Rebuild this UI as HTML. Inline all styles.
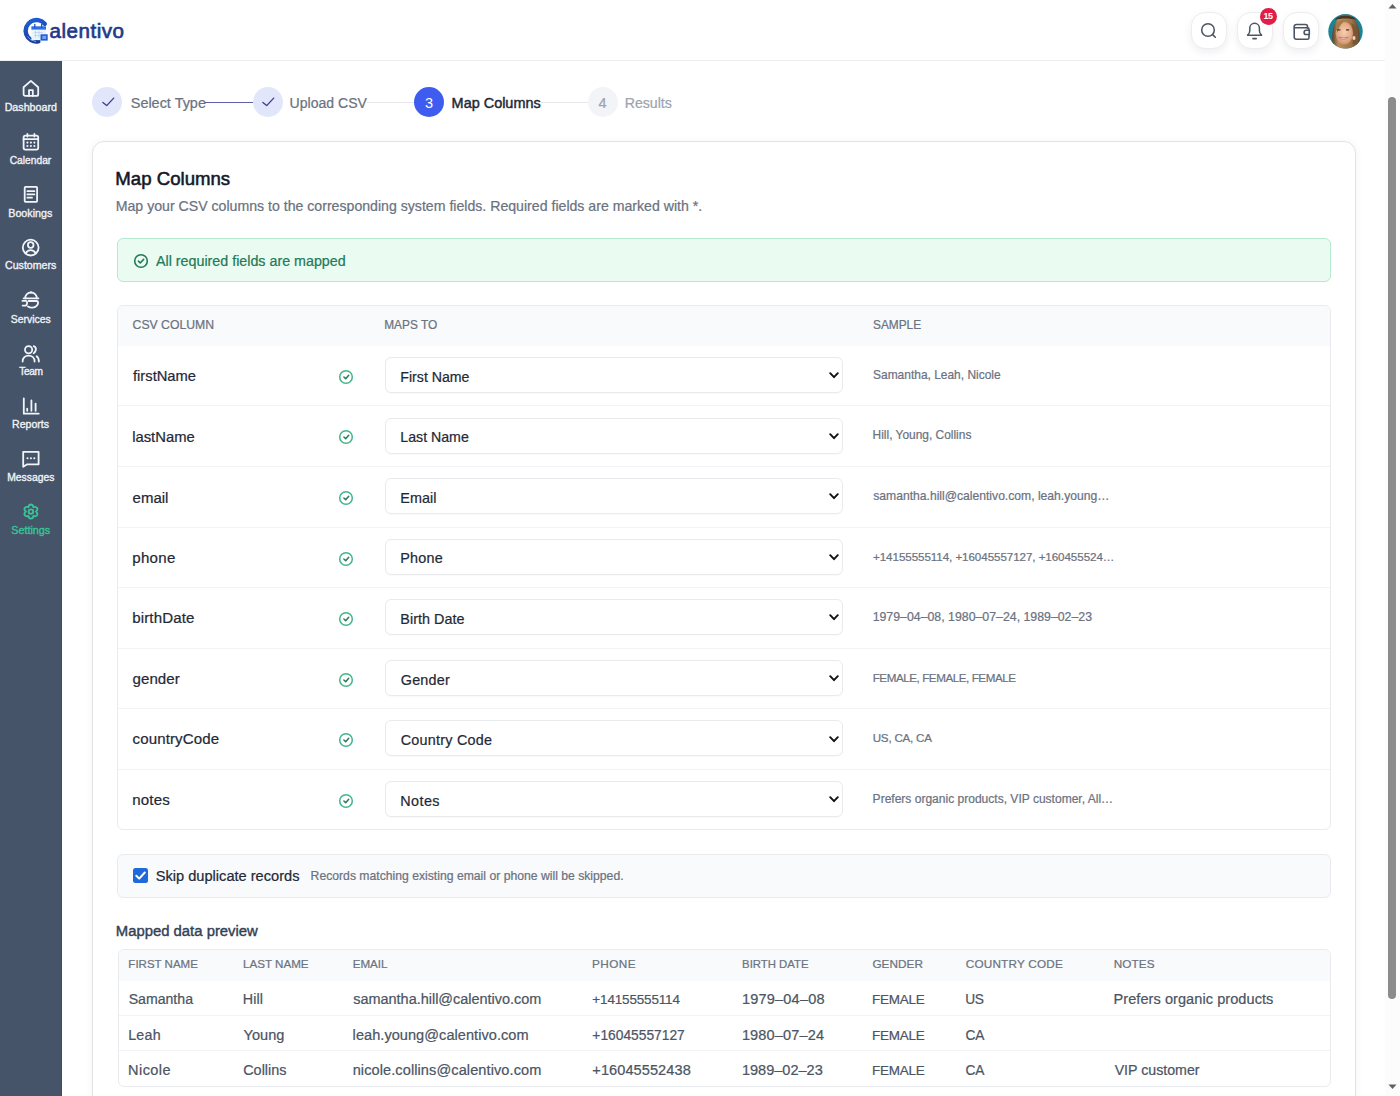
<!DOCTYPE html>
<html><head><meta charset="utf-8">
<style>
*{box-sizing:border-box;margin:0;padding:0}
html,body{width:1400px;height:1096px;overflow:hidden;background:#fff;font-family:"Liberation Sans",sans-serif;color:#1f2937}
.abs{position:absolute}
.t{position:absolute;white-space:nowrap}
svg{display:block}
#header{position:absolute;left:0;top:0;width:1385px;height:61px;background:#fff;border-bottom:1px solid #eceef1}
#sidebar{position:absolute;left:0;top:61px;width:61.5px;height:1035px;background:#465469;border-right:1px solid #3f4b5f}
.hbtn{position:absolute;top:12px;width:36px;height:37px;border-radius:14px;background:#fff;box-shadow:0 3px 8px rgba(0,0,0,0.07);border:1px solid #ebedf0}
#scroll{position:absolute;left:1385px;top:0;width:15px;height:1096px;background:#fcfcfc}
#thumb{position:absolute;left:3px;top:97px;width:8px;height:902px;background:#8c8c8c;border-radius:4px}
.circ{position:absolute;width:30px;height:30px;border-radius:50%}
#card{position:absolute;left:92px;top:141px;width:1264px;height:1000px;border:1px solid #e2e3e6;border-radius:12px;background:#fff;box-shadow:0 1px 8px rgba(0,0,0,0.05)}
.box{position:absolute}
.sel{position:absolute;left:385px;width:457.5px;height:36px;border:1px solid #e8eaed;border-radius:6px;background:#fff;box-shadow:0 1px 1px rgba(0,0,0,0.025)}
.hr{position:absolute;height:1px;background:#f1f3f5}
</style></head>
<body>

<div id="header">
<svg class="abs" style="left:20px;top:14px" width="32" height="32" viewBox="0 0 32 32">
<defs><linearGradient id="cg" x1="0" y1="0" x2="0.3" y2="1"><stop offset="0" stop-color="#1f5fd6"/><stop offset="1" stop-color="#1a3f9e"/></linearGradient></defs>
<path d="M24.8 9.9 A10.8 10.8 0 1 0 18.4 27.4" fill="none" stroke="url(#cg)" stroke-width="4.4" stroke-linecap="round"/>
<path d="M7.5 22.5 Q10 26.5 16 27.6" fill="none" stroke="#7fb0f5" stroke-width="0.9"/>
<rect x="11.4" y="12.3" width="14.6" height="13.8" fill="#eaf4ff"/>
<rect x="11.4" y="12.3" width="14.6" height="3.3" fill="#2f6fe4"/>
<path d="M14.8 10.3V13.4M21.6 10.3V13.4" stroke="#2552b8" stroke-width="1.3" stroke-linecap="round"/>
<path d="M14 18.5h9M14 21.5h6M15.5 17v7M19 17v7" stroke="#b9cdea" stroke-width="0.7"/>
<rect x="20.5" y="20.3" width="7.2" height="6.3" fill="#2558d0"/>
<rect x="22.3" y="21.8" width="3.8" height="3.2" fill="#6aa6f6"/>
</svg>
<div class="t" style="left:49.44px;top:21px;font-size:20.59px;line-height:20.59px;color:#1f3a8a;letter-spacing:0.518px;-webkit-text-stroke:0.7px #1f3a8a;">alentivo</div>
<div class="hbtn" style="left:1190.5px"></div>
<div class="hbtn" style="left:1236.5px"></div>
<div class="hbtn" style="left:1283px"></div>
<svg class="abs" style="left:1200px;top:22px" width="17" height="17" viewBox="0 0 17 17" fill="none" stroke="#4b5563" stroke-width="1.55" stroke-linecap="round" stroke-linejoin="round"><circle cx="8" cy="8" r="6.3"/><path d="M12.6 12.6 15.3 15.3"/></svg>
<svg class="abs" style="left:1246px;top:21px" width="19" height="19" viewBox="0 0 19 19" fill="none" stroke="#4b5563" stroke-width="1.5" stroke-linecap="round" stroke-linejoin="round"><path d="M1.6 14.2H15.6C14.4 13.2 13.4 11.8 13.4 9.8V7.1A4.8 4.8 0 0 0 3.8 7.1V9.8C3.8 11.8 2.8 13.2 1.6 14.2Z"/><path d="M7.1 17.6H10.1" stroke-width="1.9"/></svg>
<svg class="abs" style="left:1293px;top:22px" width="18" height="18" viewBox="0 0 18 18" fill="none" stroke="#4b5563" stroke-width="1.6" stroke-linecap="round" stroke-linejoin="round"><path d="M14.5 6.3V4.5A2 2 0 0 0 12.5 2.5H3.2A2 2 0 0 0 1.2 4.5V15.2A2 2 0 0 0 3.2 17.2H14.5A1.5 1.5 0 0 0 16 15.7V13.2"/><path d="M1.4 5.7H14.5A1.5 1.5 0 0 1 16 7.2V8.2"/><path d="M16.3 8.3H13.2A2.1 2.1 0 0 0 13.2 12.5H16.3Z"/></svg>
<div class="abs" style="left:1259.5px;top:8px;width:17px;height:17px;border-radius:50%;background:#e11d48;color:#fff;font-size:9px;font-weight:bold;text-align:center;line-height:17px;letter-spacing:-0.4px">15</div>
<svg class="abs" style="left:1328px;top:13.5px" width="35" height="35" viewBox="0 0 35 35">
<defs><clipPath id="av"><circle cx="17.5" cy="17.3" r="17.2"/></clipPath>
<radialGradient id="face" cx="0.5" cy="0.45" r="0.6"><stop offset="0" stop-color="#f4cfb0"/><stop offset="0.6" stop-color="#e6ad8a"/><stop offset="1" stop-color="#c98a64"/></radialGradient>
<linearGradient id="hair" x1="0" y1="0" x2="1" y2="0"><stop offset="0" stop-color="#5a4028"/><stop offset="0.22" stop-color="#b88e5c"/><stop offset="0.7" stop-color="#9c7448"/><stop offset="1" stop-color="#5e4430"/></linearGradient></defs>
<g clip-path="url(#av)">
<rect width="35" height="35" fill="#1a8394"/>
<path d="M5.5 35 C2.5 22 4 3 17.5 0.5 C31 2 33 18 31 35z" fill="url(#hair)"/>
<path d="M7 6 C10 0 25 0 28 6 C23 4 12 4 7 6z" fill="#4a3424"/>
<ellipse cx="16.3" cy="19.3" rx="8.6" ry="11.3" fill="url(#face)"/>
<path d="M7.8 13 C9 7 13.5 5.5 17.5 6.5 C13 9 11 13 9.6 19z" fill="#a37a4a"/>
<path d="M23 9 C25.5 14 26 22 24.5 30 L30 31 C31.5 22 29.5 12 23 9z" fill="#7a5634"/>
<path d="M4 28 C6 31 9 34 12 35 L4 35z" fill="#3e2c20"/>
<ellipse cx="10.6" cy="15.8" rx="2.2" ry="0.9" fill="#6e4838"/>
<ellipse cx="19.6" cy="15.8" rx="1.9" ry="0.9" fill="#6e4838"/>
<path d="M10.5 23.2 Q15.5 27.6 20.4 23.2 Q15.5 24.6 10.5 23.2z" fill="#f4e0da" stroke="#c07366" stroke-width="0.8"/>
<ellipse cx="26" cy="24" rx="1.5" ry="1.9" fill="#efd8b8"/>
</g></svg>
</div>
<div id="sidebar"></div>
<svg class="abs" style="left:20px;top:77.7px" width="22" height="22" viewBox="0 0 22 22" fill="none" stroke="#f1f5f9" stroke-width="1.8" stroke-linecap="round" stroke-linejoin="round"><path d="M3.6 9.3 10.9 2.9 18.2 9.3V16.2Q18.2 17.9 16.5 17.9H5.3Q3.6 17.9 3.6 16.2Z"/><path d="M9 17.9V12.1H12.8V17.9"/></svg>
<div class="t" style="left:4.67px;top:102px;font-size:10.70px;line-height:10.70px;color:#eef2f7;-webkit-text-stroke:0.35px #eef2f7;">Dashboard</div>
<svg class="abs" style="left:20px;top:130.7px" width="22" height="22" viewBox="0 0 22 22" fill="none" stroke="#f1f5f9" stroke-width="1.8" stroke-linecap="round" stroke-linejoin="round"><rect x="3.6" y="4.6" width="14.6" height="14" rx="1.8"/><path d="M3.6 8.2H18.2M7.4 2.9V5.6M14.4 2.9V5.6"/><path d="M7.4 11.6h.01M10.9 11.6h.01M14.4 11.6h.01M7.4 15h.01M10.9 15h.01M14.4 15h.01" stroke-width="2.1"/></svg>
<div class="t" style="left:9.64px;top:156px;font-size:10.27px;line-height:10.27px;color:#eef2f7;-webkit-text-stroke:0.35px #eef2f7;">Calendar</div>
<svg class="abs" style="left:20px;top:183.8px" width="22" height="22" viewBox="0 0 22 22" fill="none" stroke="#f1f5f9" stroke-width="1.8" stroke-linecap="round" stroke-linejoin="round"><rect x="4.7" y="2.9" width="12.4" height="15" rx="0.8"/><path d="M7.4 7.2H14.4M7.4 10.4H14.4M7.4 13.7H12"/></svg>
<div class="t" style="left:8.27px;top:208px;font-size:10.71px;line-height:10.71px;color:#eef2f7;-webkit-text-stroke:0.35px #eef2f7;">Bookings</div>
<svg class="abs" style="left:20px;top:236.6px" width="22" height="22" viewBox="0 0 22 22" fill="none" stroke="#f1f5f9" stroke-width="1.8" stroke-linecap="round" stroke-linejoin="round"><circle cx="10.7" cy="10.6" r="7.9"/><circle cx="10.7" cy="8" r="2.8"/><path d="M5.6 16.4C6.8 14.3 8.6 13.2 10.7 13.2S14.6 14.3 15.8 16.4"/></svg>
<div class="t" style="left:5.02px;top:260px;font-size:10.61px;line-height:10.61px;color:#eef2f7;-webkit-text-stroke:0.35px #eef2f7;">Customers</div>
<svg class="abs" style="left:20px;top:290.3px" width="22" height="22" viewBox="0 0 22 22" fill="none" stroke="#f1f5f9" stroke-width="1.8" stroke-linecap="round" stroke-linejoin="round"><path d="M5.2 8.3A5.8 5.8 0 0 1 16.8 8.3"/><path d="M11 2.2V2.6"/><path d="M3.6 8.3H18.4"/><path d="M2.4 10.9H5.8C7.6 10.9 7.6 15.2 5.4 15.6H2.6"/><path d="M8.6 11H16.4C18.6 11 18.6 13.8 16.6 15.8C14.6 17.8 10.6 18.2 8 16.4"/></svg>
<div class="t" style="left:10.78px;top:315px;font-size:10.42px;line-height:10.42px;color:#eef2f7;-webkit-text-stroke:0.35px #eef2f7;">Services</div>
<svg class="abs" style="left:20px;top:342.5px" width="22" height="22" viewBox="0 0 22 22" fill="none" stroke="#f1f5f9" stroke-width="1.8" stroke-linecap="round" stroke-linejoin="round"><circle cx="8.6" cy="6.7" r="3.6"/><path d="M2.6 18.6C2.6 14.8 5.2 12.6 8.6 12.6S14.6 14.8 14.6 18.6"/><path d="M13.7 3.2C15.6 4 16.2 6 15.6 7.6S14.4 9.8 13.6 10.2"/><path d="M16.6 13.2C18 14.2 18.9 16.2 18.9 18.6"/></svg>
<div class="t" style="left:19.13px;top:367px;font-size:10.19px;line-height:10.19px;color:#eef2f7;letter-spacing:-0.300px;-webkit-text-stroke:0.35px #eef2f7;">Team</div>
<svg class="abs" style="left:20px;top:395.7px" width="22" height="22" viewBox="0 0 22 22" fill="none" stroke="#f1f5f9" stroke-width="1.8" stroke-linecap="round" stroke-linejoin="round"><path d="M3.8 2.3V17.7H18.7"/><path d="M7.2 12.6V14.8M11.4 4.4V14.8M15.6 7.6V14.8"/></svg>
<div class="t" style="left:12.08px;top:419px;font-size:10.55px;line-height:10.55px;color:#eef2f7;-webkit-text-stroke:0.35px #eef2f7;">Reports</div>
<svg class="abs" style="left:20px;top:448px" width="22" height="22" viewBox="0 0 22 22" fill="none" stroke="#f1f5f9" stroke-width="1.8" stroke-linecap="round" stroke-linejoin="round"><path d="M3.2 3.9H18.6V16.3H7.2L3.2 18.7Z"/><path d="M7.5 10.2h.01M10.9 10.2h.01M14.3 10.2h.01" stroke-width="2.1"/></svg>
<div class="t" style="left:7.20px;top:473px;font-size:10.36px;line-height:10.36px;color:#eef2f7;-webkit-text-stroke:0.35px #eef2f7;">Messages</div>
<svg class="abs" style="left:20px;top:501px" width="22" height="22" viewBox="0 0 22 22" fill="none" stroke="#38c597" stroke-width="1.8" stroke-linecap="round" stroke-linejoin="round"><path d="M8.40 6.27 C8.89 2.56 12.91 2.56 13.40 6.27 C16.86 4.84 18.87 8.32 15.90 10.60 C18.87 12.88 16.86 16.36 13.40 14.93 C12.91 18.64 8.89 18.64 8.40 14.93 C4.94 16.36 2.93 12.88 5.90 10.60 C2.93 8.32 4.94 4.84 8.40 6.27Z"/><circle cx="10.9" cy="10.6" r="2.3"/></svg>
<div class="t" style="left:11.26px;top:525px;font-size:10.79px;line-height:10.79px;color:#38c597;-webkit-text-stroke:0.35px #38c597;">Settings</div>
<div id="scroll"><div id="thumb"></div>
<svg class="abs" style="left:3px;top:3px" width="9" height="6" viewBox="0 0 9 6"><path d="M0.5 5.5 4.5 1 8.5 5.5z" fill="#606060"/></svg>
<svg class="abs" style="left:3px;top:1084px" width="9" height="6" viewBox="0 0 9 6"><path d="M0.5 0.5 4.5 5 8.5 0.5z" fill="#606060"/></svg>
</div>
<div class="circ" style="left:92.2px;top:87px;background:#e2e6fb"></div>
<svg class="abs" style="left:99.5px;top:94px" width="16" height="16" viewBox="0 0 16 16" fill="none" stroke="#3a3d96" stroke-width="1.35" stroke-linecap="round" stroke-linejoin="round"><path d="M2.9 8.5 6.7 11.6 13.7 4.1"/></svg>
<div class="t" style="left:130.75px;top:96px;font-size:14.44px;line-height:14.44px;color:#6b7280;-webkit-text-stroke:0.22px #6b7280;">Select Type</div>
<div class="abs" style="left:205px;top:101.5px;width:48px;height:1.2px;background:#5d60a6"></div>
<div class="circ" style="left:252.5px;top:87px;background:#e2e6fb"></div>
<svg class="abs" style="left:259.6px;top:94px" width="16" height="16" viewBox="0 0 16 16" fill="none" stroke="#3a3d96" stroke-width="1.35" stroke-linecap="round" stroke-linejoin="round"><path d="M2.9 8.5 6.7 11.6 13.7 4.1"/></svg>
<div class="t" style="left:289.62px;top:96px;font-size:14.05px;line-height:14.05px;color:#6b7280;-webkit-text-stroke:0.22px #6b7280;">Upload CSV</div>
<div class="abs" style="left:367px;top:101.5px;width:47px;height:1px;background:#e5e7eb"></div>
<div class="circ" style="left:414px;top:87px;background:#3f5cf0"></div>
<div class="t" style="left:414.00px;top:96px;font-size:14.50px;line-height:14.50px;color:#fff;width:30px;text-align:center;">3</div>
<div class="t" style="left:451.62px;top:96px;font-size:14.44px;line-height:14.44px;color:#1f2937;-webkit-text-stroke:0.45px #1f2937;">Map Columns</div>
<div class="abs" style="left:541px;top:101.5px;width:47px;height:1px;background:#e5e7eb"></div>
<div class="circ" style="left:587.5px;top:87px;background:#f3f4f7"></div>
<div class="t" style="left:587.50px;top:96px;font-size:14.50px;line-height:14.50px;color:#9ca3af;width:30px;text-align:center;-webkit-text-stroke:0.22px #9ca3af;">4</div>
<div class="t" style="left:624.74px;top:96px;font-size:14.12px;line-height:14.12px;color:#9ca3af;-webkit-text-stroke:0.22px #9ca3af;">Results</div>
<div id="card"></div>
<div class="t" style="left:115.37px;top:170px;font-size:18.63px;line-height:18.63px;color:#111827;-webkit-text-stroke:0.55px #111827;">Map Columns</div>
<div class="t" style="left:115.74px;top:199px;font-size:14.14px;line-height:14.14px;color:#6b7280;-webkit-text-stroke:0.22px #6b7280;">Map your CSV columns to the corresponding system fields. Required fields are marked with *.</div>
<div class="box" style="left:116.5px;top:238px;width:1214px;height:43.5px;background:#eafbf2;border:1px solid #b5ead1;border-radius:6px"></div>
<svg class="abs" style="left:132.5px;top:252.8px" width="16" height="16" viewBox="0 0 16 16" fill="none" stroke="#237a57" stroke-width="1.6" stroke-linecap="round" stroke-linejoin="round"><circle cx="8" cy="8" r="6.3"/><path d="M5.4 8.2 7.3 10 10.6 6.4"/></svg>
<div class="t" style="left:155.97px;top:254px;font-size:14.29px;line-height:14.29px;color:#237a57;-webkit-text-stroke:0.22px #237a57;">All required fields are mapped</div>
<div class="box" style="left:117px;top:305px;width:1214px;height:525px;border:1px solid #e9ebee;border-radius:6px;background:#fff;overflow:hidden"><div style="height:39.5px;background:#f8fafc"></div></div>
<div class="t" style="left:132.59px;top:319px;font-size:12.22px;line-height:12.22px;color:#6b7280;-webkit-text-stroke:0.22px #6b7280;">CSV COLUMN</div>
<div class="t" style="left:384.23px;top:320px;font-size:11.86px;line-height:11.86px;color:#6b7280;-webkit-text-stroke:0.22px #6b7280;">MAPS TO</div>
<div class="t" style="left:872.97px;top:320px;font-size:11.86px;line-height:11.86px;color:#6b7280;-webkit-text-stroke:0.22px #6b7280;">SAMPLE</div>
<div class="t" style="left:132.99px;top:369px;font-size:14.74px;line-height:14.74px;color:#1f2937;-webkit-text-stroke:0.22px #1f2937;">firstName</div>
<svg class="abs" style="left:337.9px;top:368.9px" width="16" height="16" viewBox="0 0 16 16" fill="none" stroke="#43b58c" stroke-width="1.5" stroke-linecap="round" stroke-linejoin="round"><circle cx="8" cy="8" r="6.3"/><path d="M5.9 8 7.7 9.7 10.7 6.2" stroke="#2b7a5a" stroke-width="1.5"/></svg>
<div class="sel" style="top:357.1px"></div>
<div class="t" style="left:400.34px;top:370px;font-size:14.15px;line-height:14.15px;color:#1f2937;-webkit-text-stroke:0.22px #1f2937;">First Name</div>
<svg class="abs" style="left:829px;top:372.2px" width="10" height="7" viewBox="0 0 10 7"><path d="M1.2 1.2 5 5.2 8.8 1.2" fill="none" stroke="#111" stroke-width="1.9" stroke-linecap="round" stroke-linejoin="round"/></svg>
<div class="t" style="left:873.06px;top:370px;font-size:11.96px;line-height:11.96px;color:#6b7280;-webkit-text-stroke:0.22px #6b7280;">Samantha, Leah, Nicole</div>
<div class="hr" style="left:118px;top:405.4px;width:1212px"></div>
<div class="t" style="left:132.21px;top:430px;font-size:14.81px;line-height:14.81px;color:#1f2937;-webkit-text-stroke:0.22px #1f2937;">lastName</div>
<svg class="abs" style="left:337.9px;top:429.4px" width="16" height="16" viewBox="0 0 16 16" fill="none" stroke="#43b58c" stroke-width="1.5" stroke-linecap="round" stroke-linejoin="round"><circle cx="8" cy="8" r="6.3"/><path d="M5.9 8 7.7 9.7 10.7 6.2" stroke="#2b7a5a" stroke-width="1.5"/></svg>
<div class="sel" style="top:417.6px"></div>
<div class="t" style="left:400.34px;top:430px;font-size:14.16px;line-height:14.16px;color:#1f2937;-webkit-text-stroke:0.22px #1f2937;">Last Name</div>
<svg class="abs" style="left:829px;top:432.8px" width="10" height="7" viewBox="0 0 10 7"><path d="M1.2 1.2 5 5.2 8.8 1.2" fill="none" stroke="#111" stroke-width="1.9" stroke-linecap="round" stroke-linejoin="round"/></svg>
<div class="t" style="left:872.62px;top:430px;font-size:11.93px;line-height:11.93px;color:#6b7280;-webkit-text-stroke:0.22px #6b7280;">Hill, Young, Collins</div>
<div class="hr" style="left:118px;top:466.0px;width:1212px"></div>
<div class="t" style="left:132.57px;top:490px;font-size:14.99px;line-height:14.99px;color:#1f2937;-webkit-text-stroke:0.22px #1f2937;">email</div>
<svg class="abs" style="left:337.9px;top:490.0px" width="16" height="16" viewBox="0 0 16 16" fill="none" stroke="#43b58c" stroke-width="1.5" stroke-linecap="round" stroke-linejoin="round"><circle cx="8" cy="8" r="6.3"/><path d="M5.9 8 7.7 9.7 10.7 6.2" stroke="#2b7a5a" stroke-width="1.5"/></svg>
<div class="sel" style="top:478.2px"></div>
<div class="t" style="left:400.32px;top:491px;font-size:14.36px;line-height:14.36px;color:#1f2937;letter-spacing:0.080px;-webkit-text-stroke:0.22px #1f2937;">Email</div>
<svg class="abs" style="left:829px;top:493.3px" width="10" height="7" viewBox="0 0 10 7"><path d="M1.2 1.2 5 5.2 8.8 1.2" fill="none" stroke="#111" stroke-width="1.9" stroke-linecap="round" stroke-linejoin="round"/></svg>
<div class="t" style="left:873.27px;top:490px;font-size:12.14px;line-height:12.14px;color:#6b7280;-webkit-text-stroke:0.22px #6b7280;">samantha.hill@calentivo.com, leah.young…</div>
<div class="hr" style="left:118px;top:526.5px;width:1212px"></div>
<div class="t" style="left:132.23px;top:550px;font-size:15.08px;line-height:15.08px;color:#1f2937;letter-spacing:0.298px;-webkit-text-stroke:0.22px #1f2937;">phone</div>
<svg class="abs" style="left:337.9px;top:550.5px" width="16" height="16" viewBox="0 0 16 16" fill="none" stroke="#43b58c" stroke-width="1.5" stroke-linecap="round" stroke-linejoin="round"><circle cx="8" cy="8" r="6.3"/><path d="M5.9 8 7.7 9.7 10.7 6.2" stroke="#2b7a5a" stroke-width="1.5"/></svg>
<div class="sel" style="top:538.8px"></div>
<div class="t" style="left:400.32px;top:551px;font-size:14.36px;line-height:14.36px;color:#1f2937;letter-spacing:0.222px;-webkit-text-stroke:0.22px #1f2937;">Phone</div>
<svg class="abs" style="left:829px;top:553.8px" width="10" height="7" viewBox="0 0 10 7"><path d="M1.2 1.2 5 5.2 8.8 1.2" fill="none" stroke="#111" stroke-width="1.9" stroke-linecap="round" stroke-linejoin="round"/></svg>
<div class="t" style="left:873.04px;top:551px;font-size:11.62px;line-height:11.62px;color:#6b7280;letter-spacing:-0.073px;-webkit-text-stroke:0.22px #6b7280;">+14155555114, +16045557127, +160455524…</div>
<div class="hr" style="left:118px;top:587.1px;width:1212px"></div>
<div class="t" style="left:132.23px;top:610px;font-size:15.08px;line-height:15.08px;color:#1f2937;letter-spacing:0.119px;-webkit-text-stroke:0.22px #1f2937;">birthDate</div>
<svg class="abs" style="left:337.9px;top:611.1px" width="16" height="16" viewBox="0 0 16 16" fill="none" stroke="#43b58c" stroke-width="1.5" stroke-linecap="round" stroke-linejoin="round"><circle cx="8" cy="8" r="6.3"/><path d="M5.9 8 7.7 9.7 10.7 6.2" stroke="#2b7a5a" stroke-width="1.5"/></svg>
<div class="sel" style="top:599.3px"></div>
<div class="t" style="left:400.32px;top:612px;font-size:14.36px;line-height:14.36px;color:#1f2937;letter-spacing:0.028px;-webkit-text-stroke:0.22px #1f2937;">Birth Date</div>
<svg class="abs" style="left:829px;top:614.4px" width="10" height="7" viewBox="0 0 10 7"><path d="M1.2 1.2 5 5.2 8.8 1.2" fill="none" stroke="#111" stroke-width="1.9" stroke-linecap="round" stroke-linejoin="round"/></svg>
<div class="t" style="left:872.66px;top:611px;font-size:12.33px;line-height:12.33px;color:#6b7280;-webkit-text-stroke:0.22px #6b7280;">1979–04–08, 1980–07–24, 1989–02–23</div>
<div class="hr" style="left:118px;top:647.6px;width:1212px"></div>
<div class="t" style="left:132.57px;top:671px;font-size:15.08px;line-height:15.08px;color:#1f2937;letter-spacing:0.043px;-webkit-text-stroke:0.22px #1f2937;">gender</div>
<svg class="abs" style="left:337.9px;top:671.6px" width="16" height="16" viewBox="0 0 16 16" fill="none" stroke="#43b58c" stroke-width="1.5" stroke-linecap="round" stroke-linejoin="round"><circle cx="8" cy="8" r="6.3"/><path d="M5.9 8 7.7 9.7 10.7 6.2" stroke="#2b7a5a" stroke-width="1.5"/></svg>
<div class="sel" style="top:659.9px"></div>
<div class="t" style="left:400.78px;top:673px;font-size:14.36px;line-height:14.36px;color:#1f2937;letter-spacing:0.210px;-webkit-text-stroke:0.22px #1f2937;">Gender</div>
<svg class="abs" style="left:829px;top:674.9px" width="10" height="7" viewBox="0 0 10 7"><path d="M1.2 1.2 5 5.2 8.8 1.2" fill="none" stroke="#111" stroke-width="1.9" stroke-linecap="round" stroke-linejoin="round"/></svg>
<div class="t" style="left:872.65px;top:672px;font-size:11.62px;line-height:11.62px;color:#6b7280;letter-spacing:-0.423px;-webkit-text-stroke:0.22px #6b7280;">FEMALE, FEMALE, FEMALE</div>
<div class="hr" style="left:118px;top:708.2px;width:1212px"></div>
<div class="t" style="left:132.57px;top:731px;font-size:15.08px;line-height:15.08px;color:#1f2937;letter-spacing:0.109px;-webkit-text-stroke:0.22px #1f2937;">countryCode</div>
<svg class="abs" style="left:337.9px;top:732.2px" width="16" height="16" viewBox="0 0 16 16" fill="none" stroke="#43b58c" stroke-width="1.5" stroke-linecap="round" stroke-linejoin="round"><circle cx="8" cy="8" r="6.3"/><path d="M5.9 8 7.7 9.7 10.7 6.2" stroke="#2b7a5a" stroke-width="1.5"/></svg>
<div class="sel" style="top:720.4px"></div>
<div class="t" style="left:400.78px;top:733px;font-size:14.36px;line-height:14.36px;color:#1f2937;letter-spacing:0.239px;-webkit-text-stroke:0.22px #1f2937;">Country Code</div>
<svg class="abs" style="left:829px;top:735.5px" width="10" height="7" viewBox="0 0 10 7"><path d="M1.2 1.2 5 5.2 8.8 1.2" fill="none" stroke="#111" stroke-width="1.9" stroke-linecap="round" stroke-linejoin="round"/></svg>
<div class="t" style="left:872.71px;top:732px;font-size:11.62px;line-height:11.62px;color:#6b7280;letter-spacing:-0.223px;-webkit-text-stroke:0.22px #6b7280;">US, CA, CA</div>
<div class="hr" style="left:118px;top:768.8px;width:1212px"></div>
<div class="t" style="left:132.20px;top:792px;font-size:15.08px;line-height:15.08px;color:#1f2937;letter-spacing:0.188px;-webkit-text-stroke:0.22px #1f2937;">notes</div>
<svg class="abs" style="left:337.9px;top:792.8px" width="16" height="16" viewBox="0 0 16 16" fill="none" stroke="#43b58c" stroke-width="1.5" stroke-linecap="round" stroke-linejoin="round"><circle cx="8" cy="8" r="6.3"/><path d="M5.9 8 7.7 9.7 10.7 6.2" stroke="#2b7a5a" stroke-width="1.5"/></svg>
<div class="sel" style="top:781.0px"></div>
<div class="t" style="left:400.32px;top:794px;font-size:14.36px;line-height:14.36px;color:#1f2937;letter-spacing:0.420px;-webkit-text-stroke:0.22px #1f2937;">Notes</div>
<svg class="abs" style="left:829px;top:796.0px" width="10" height="7" viewBox="0 0 10 7"><path d="M1.2 1.2 5 5.2 8.8 1.2" fill="none" stroke="#111" stroke-width="1.9" stroke-linecap="round" stroke-linejoin="round"/></svg>
<div class="t" style="left:872.61px;top:793px;font-size:12.04px;line-height:12.04px;color:#6b7280;-webkit-text-stroke:0.22px #6b7280;">Prefers organic products, VIP customer, All…</div>
<div class="box" style="left:117px;top:854px;width:1214px;height:43.5px;background:#f8fafc;border:1px solid #e9ebee;border-radius:6px"></div>
<div class="abs" style="left:133px;top:868px;width:15px;height:15px;border-radius:2.5px;background:#1d6ad8"></div>
<svg class="abs" style="left:133px;top:868px" width="15" height="15" viewBox="0 0 15 15"><path d="M3.3 7.8 6.2 10.6 11.8 4.5" fill="none" stroke="#fff" stroke-width="2" stroke-linecap="round" stroke-linejoin="round"/></svg>
<div class="t" style="left:155.74px;top:869px;font-size:14.62px;line-height:14.62px;color:#1f2937;-webkit-text-stroke:0.22px #1f2937;">Skip duplicate records</div>
<div class="t" style="left:310.60px;top:870px;font-size:12.20px;line-height:12.20px;color:#6b7280;-webkit-text-stroke:0.22px #6b7280;">Records matching existing email or phone will be skipped.</div>
<div class="t" style="left:115.78px;top:924px;font-size:14.87px;line-height:14.87px;color:#334155;-webkit-text-stroke:0.4px #334155;">Mapped data preview</div>
<div class="box" style="left:117.5px;top:948.5px;width:1213px;height:138.5px;border:1px solid #e9ebee;border-radius:6px;background:#fff;overflow:hidden"><div style="height:31px;background:#f8fafc"></div></div>
<div class="t" style="left:128.36px;top:959px;font-size:11.52px;line-height:11.52px;color:#6b7280;-webkit-text-stroke:0.22px #6b7280;">FIRST NAME</div>
<div class="t" style="left:242.95px;top:958px;font-size:11.64px;line-height:11.64px;color:#6b7280;-webkit-text-stroke:0.22px #6b7280;">LAST NAME</div>
<div class="t" style="left:352.65px;top:958px;font-size:11.64px;line-height:11.64px;color:#6b7280;-webkit-text-stroke:0.22px #6b7280;">EMAIL</div>
<div class="t" style="left:592.04px;top:958px;font-size:11.75px;line-height:11.75px;color:#6b7280;letter-spacing:0.417px;-webkit-text-stroke:0.22px #6b7280;">PHONE</div>
<div class="t" style="left:742.07px;top:959px;font-size:11.36px;line-height:11.36px;color:#6b7280;-webkit-text-stroke:0.22px #6b7280;">BIRTH DATE</div>
<div class="t" style="left:872.41px;top:958px;font-size:11.75px;line-height:11.75px;color:#6b7280;letter-spacing:0.051px;-webkit-text-stroke:0.22px #6b7280;">GENDER</div>
<div class="t" style="left:965.71px;top:958px;font-size:11.75px;line-height:11.75px;color:#6b7280;letter-spacing:0.199px;-webkit-text-stroke:0.22px #6b7280;">COUNTRY CODE</div>
<div class="t" style="left:1113.74px;top:958px;font-size:11.75px;line-height:11.75px;color:#6b7280;letter-spacing:0.102px;-webkit-text-stroke:0.22px #6b7280;">NOTES</div>
<div class="t" style="left:128.66px;top:992px;font-size:14.11px;line-height:14.11px;color:#4b5563;-webkit-text-stroke:0.22px #4b5563;">Samantha</div>
<div class="t" style="left:242.73px;top:992px;font-size:14.28px;line-height:14.28px;color:#4b5563;letter-spacing:0.126px;-webkit-text-stroke:0.22px #4b5563;">Hill</div>
<div class="t" style="left:353.21px;top:992px;font-size:14.46px;line-height:14.46px;color:#4b5563;-webkit-text-stroke:0.22px #4b5563;">samantha.hill@calentivo.com</div>
<div class="t" style="left:592.35px;top:993px;font-size:13.44px;line-height:13.44px;color:#4b5563;letter-spacing:-0.139px;-webkit-text-stroke:0.22px #4b5563;">+14155555114</div>
<div class="t" style="left:741.89px;top:992px;font-size:14.56px;line-height:14.56px;color:#4b5563;letter-spacing:0.196px;-webkit-text-stroke:0.22px #4b5563;">1979–04–08</div>
<div class="t" style="left:871.90px;top:993px;font-size:13.44px;line-height:13.44px;color:#4b5563;letter-spacing:-0.201px;-webkit-text-stroke:0.22px #4b5563;">FEMALE</div>
<div class="t" style="left:965.24px;top:993px;font-size:13.72px;line-height:13.72px;color:#4b5563;letter-spacing:-0.283px;-webkit-text-stroke:0.22px #4b5563;">US</div>
<div class="t" style="left:1113.51px;top:992px;font-size:14.56px;line-height:14.56px;color:#4b5563;letter-spacing:0.061px;-webkit-text-stroke:0.22px #4b5563;">Prefers organic products</div>
<div class="hr" style="left:118.5px;top:1014.7px;width:1211px"></div>
<div class="t" style="left:128.13px;top:1028px;font-size:14.28px;line-height:14.28px;color:#4b5563;letter-spacing:0.300px;-webkit-text-stroke:0.22px #4b5563;">Leah</div>
<div class="t" style="left:243.58px;top:1028px;font-size:14.56px;line-height:14.56px;color:#4b5563;letter-spacing:0.021px;-webkit-text-stroke:0.22px #4b5563;">Young</div>
<div class="t" style="left:352.62px;top:1028px;font-size:14.56px;line-height:14.56px;color:#4b5563;letter-spacing:0.047px;-webkit-text-stroke:0.22px #4b5563;">leah.young@calentivo.com</div>
<div class="t" style="left:592.34px;top:1029px;font-size:13.81px;line-height:13.81px;color:#4b5563;-webkit-text-stroke:0.22px #4b5563;">+16045557127</div>
<div class="t" style="left:741.89px;top:1028px;font-size:14.56px;line-height:14.56px;color:#4b5563;letter-spacing:0.140px;-webkit-text-stroke:0.22px #4b5563;">1980–07–24</div>
<div class="t" style="left:871.90px;top:1029px;font-size:13.44px;line-height:13.44px;color:#4b5563;letter-spacing:-0.201px;-webkit-text-stroke:0.22px #4b5563;">FEMALE</div>
<div class="t" style="left:965.61px;top:1029px;font-size:13.72px;line-height:13.72px;color:#4b5563;letter-spacing:-0.244px;-webkit-text-stroke:0.22px #4b5563;">CA</div>
<div class="hr" style="left:118.5px;top:1050.3px;width:1211px"></div>
<div class="t" style="left:128.11px;top:1063px;font-size:14.56px;line-height:14.56px;color:#4b5563;letter-spacing:0.394px;-webkit-text-stroke:0.22px #4b5563;">Nicole</div>
<div class="t" style="left:243.18px;top:1063px;font-size:14.44px;line-height:14.44px;color:#4b5563;-webkit-text-stroke:0.22px #4b5563;">Collins</div>
<div class="t" style="left:352.64px;top:1063px;font-size:14.56px;line-height:14.56px;color:#4b5563;letter-spacing:0.095px;-webkit-text-stroke:0.22px #4b5563;">nicole.collins@calentivo.com</div>
<div class="t" style="left:592.30px;top:1063px;font-size:14.56px;line-height:14.56px;color:#4b5563;letter-spacing:0.086px;-webkit-text-stroke:0.22px #4b5563;">+16045552438</div>
<div class="t" style="left:741.89px;top:1063px;font-size:14.56px;line-height:14.56px;color:#4b5563;-webkit-text-stroke:0.22px #4b5563;">1989–02–23</div>
<div class="t" style="left:871.90px;top:1064px;font-size:13.44px;line-height:13.44px;color:#4b5563;letter-spacing:-0.201px;-webkit-text-stroke:0.22px #4b5563;">FEMALE</div>
<div class="t" style="left:965.61px;top:1064px;font-size:13.72px;line-height:13.72px;color:#4b5563;letter-spacing:-0.244px;-webkit-text-stroke:0.22px #4b5563;">CA</div>
<div class="t" style="left:1114.64px;top:1063px;font-size:14.20px;line-height:14.20px;color:#4b5563;-webkit-text-stroke:0.22px #4b5563;">VIP customer</div>
</body></html>
